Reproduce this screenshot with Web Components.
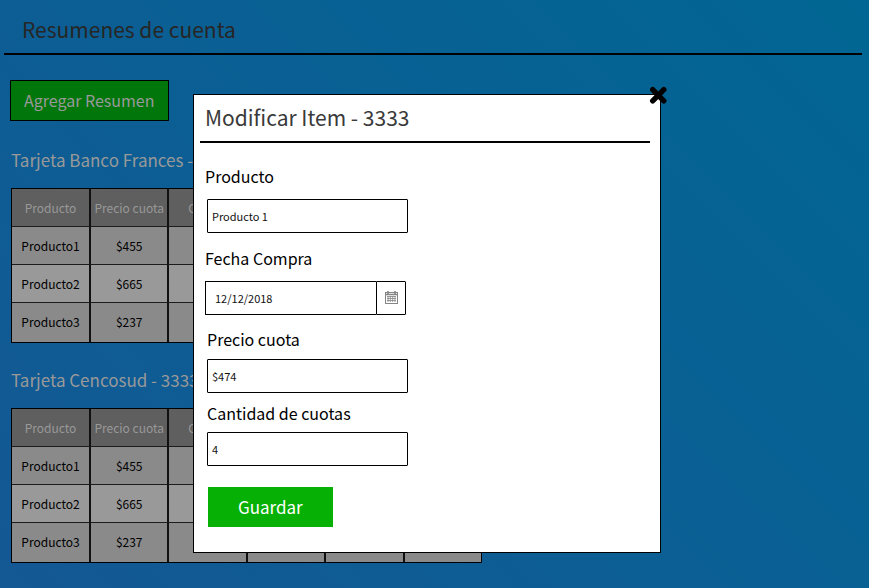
<!DOCTYPE html>
<html lang="es">
<head>
<meta charset="utf-8">
<meta name="viewport" content="width=device-width, initial-scale=1">
<title>Resumenes de cuenta</title>
<style>
  body { margin: 0; font-family: "Noto Sans CJK SC", "Noto Sans", sans-serif; color: #000; }
</style>
</head>
<body>
<account-page>
  <page-title slot="title">Resumenes de cuenta</page-title>
  <action-button variant="add">Agregar Resumen</action-button>
  <card-summary heading="Tarjeta Banco Frances -"></card-summary>
  <card-summary heading="Tarjeta Cencosud - 3333"></card-summary>
  <modal-dialog slot="modal" heading="Modificar Item - 3333">
    <form-field label="Producto" value="Producto 1" roomy></form-field>
    <date-field label="Fecha Compra" value="12/12/2018"></date-field>
    <form-field label="Precio cuota" value="$474"></form-field>
    <form-field label="Cantidad de cuotas" value="4" tight></form-field>
    <action-button slot="actions">Guardar</action-button>
  </modal-dialog>
</account-page>

<script>
class BaseElement extends HTMLElement {
  connectedCallback() {
    if (this.shadowRoot) return;
    this.attachShadow({ mode: 'open' }).innerHTML = this.render();
  }
}

class AccountPage extends BaseElement {
  render() {
    return `<style>
      :host { display: block; position: relative; min-height: 100vh; box-sizing: border-box;
        background: linear-gradient(45deg, #145894, #016693); }
      header { padding: 0 7px 0 4px; }
      main { display: flex; flex-direction: column; align-items: flex-start; gap: 24px; padding: 25px 10px; }
    </style>
    <header><slot name="title"></slot></header>
    <main><slot></slot></main>
    <slot name="modal"></slot>`;
  }
}

class PageTitle extends BaseElement {
  render() {
    return `<style>
      :host { display: block; }
      h1 { margin: 0; padding: 13px 18px 8px; border-bottom: 2px solid #000; font-size: 21px;
        line-height: 32px; font-weight: 400; color: #262626; }
    </style><h1><slot></slot></h1>`;
  }
}

class ActionButton extends BaseElement {
  render() {
    return `<style>
      :host { display: inline-block; }
      :host([variant="add"]) { margin-bottom: 2px; }
      button { display: block; font: inherit; font-size: 17px; line-height: 24px; color: #fff; background: #06b005;
        border: 0; padding: 8px 30px; margin: 0; white-space: nowrap; cursor: pointer; }
      :host([variant="add"]) button { font-size: 16px; line-height: 23px; color: #999; background: #00760b;
        border: 1px solid #000; padding: 8px 13px; }
    </style><button type="button"><slot></slot></button>`;
  }
}

class CardSummary extends BaseElement {
  render() {
    const rows = [['Producto1', '$455'], ['Producto2', '$665'], ['Producto3', '$237']];
    const blanks = '<td></td>'.repeat(4);
    return `<style>
      :host { display: block; width: 100%; }
      h2 { margin: 0 0 15px; padding-left: 1px; font-size: 17px; line-height: 26px; font-weight: 400; color: #999; }
      table { table-layout: fixed; width: min(471px, 100%); margin-left: 1px; box-sizing: border-box;
        border: 1px solid #000; border-spacing: 0; font-size: 12px; line-height: 18px; text-align: center; }
      th, td { box-sizing: border-box; height: 38px; padding: 0; border-top: 1px solid #1c1c1c; white-space: nowrap; }
      th { height: 37px; border-top: 0; background: #5f5f5f; color: #999; font-weight: 400; }
      th:first-child { width: 77px; }
      td { background: #8a8a8a; }
      tr:nth-child(even) td { background: #999; }
      tr:last-child td { height: 40px; padding-bottom: 2px; }
      th + th, td + td { border-left: 2px solid #111; }
    </style>
    <h2>${this.getAttribute('heading')}</h2>
    <table>
      <thead><tr><th>Producto</th><th>Precio cuota</th><th>Cuotas</th><th></th><th></th><th></th></tr></thead>
      <tbody>${rows.map(([a, b]) => `<tr><td>${a}</td><td>${b}</td>${blanks}</tr>`).join('')}</tbody>
    </table>`;
  }
}

class ModalDialog extends BaseElement {
  render() {
    return `<style>
      :host { display: block; position: absolute; inset: 0; padding: 94px 16px 16px 193px; box-sizing: border-box; }
      section { position: relative; box-sizing: border-box; width: 100%; max-width: 468px; padding: 6px 10px 25px 6px;
        background: #fff; border: 1px solid #000; }
      h2 { margin: 0 0 7px; padding: 0 5px 8px; border-bottom: 2px solid #000; font-size: 21px; line-height: 32px;
        font-weight: 400; color: #3a3a3a; }
      form { display: flex; flex-direction: column; padding: 0 5px; }
      .actions { padding: 21px 3px 0; display: flex; }
      .close { position: absolute; top: -9px; right: -7px; width: 18px; height: 18px; padding: 0; border: 0;
        background: none; cursor: pointer; }
      svg { display: block; width: 18px; height: 18px; }
    </style>
    <section role="dialog" aria-labelledby="t">
      <button class="close" type="button" aria-label="Cerrar">
        <svg viewBox="0 0 18 18"><path d="M3.7 3.7 14.8 14.8M14.8 3.7 3.7 14.8" stroke="#000" stroke-width="5.4" stroke-linecap="round"/></svg>
      </button>
      <h2 id="t">${this.getAttribute('heading')}</h2>
      <form><slot></slot><div class="actions"><slot name="actions"></slot></div></form>
    </section>`;
  }
}

const fieldStyles = `
  :host { display: flex; flex-direction: column; align-items: flex-start; padding: 12px 0 0 2px; gap: 8px; }
  label { font-size: 16px; line-height: 24px; }
  input { font: inherit; font-size: 11px; line-height: 16px; color: #111; background: #fff; border: 1px solid #000;
    border-radius: 1px; box-sizing: border-box; width: 201px; max-width: 100%; height: 34px; padding: 0 4px; margin: 0; outline: 0; }`;

class FormField extends BaseElement {
  render() {
    return `<style>${fieldStyles}
      :host([roomy]) { padding-top: 14px; gap: 11px; }
      :host([roomy]) label { margin-left: -2px; }
      :host([tight]) { padding-top: 8px; gap: 7px; }
    </style>
    <label for="f">${this.getAttribute('label')}</label>
    <input id="f" type="text" value="${this.getAttribute('value')}">`;
  }
}

class DateField extends BaseElement {
  render() {
    return `<style>${fieldStyles}
      :host { padding: 13px 0 0; gap: 11px; }
      .row { display: flex; width: 201px; max-width: 100%; }
      input { flex: 1; min-width: 0; padding: 0 9px; border-right: 0; border-radius: 1px 0 0 1px; }
      button { display: flex; align-items: center; justify-content: center; width: 30px; height: 34px; padding: 0;
        border: 1px solid #000; border-radius: 0 1px 1px 0; background: #fff; cursor: pointer; }
      svg { width: 14px; height: 14px; display: block; }
    </style>
    <label for="d">${this.getAttribute('label')}</label>
    <div class="row">
      <input id="d" type="text" value="${this.getAttribute('value')}">
      <button type="button" aria-label="Abrir calendario">
        <svg viewBox="0 0 14 14" fill="none" stroke="#858585">
          <rect x="1.5" y="1.5" width="12" height="11"/>
          <path d="M1.500 3.500h12M4 0v3M11 0v3" stroke-width="1.6"/>
          <path d="M3 5.500h9M3 7.500h9M3 9.500h9M4 5v6M6.300 5v6M8.700 5v6M11 5v6" stroke-width=".8"/>
        </svg>
      </button>
    </div>`;
  }
}

customElements.define('page-title', PageTitle);
customElements.define('action-button', ActionButton);
customElements.define('card-summary', CardSummary);
customElements.define('form-field', FormField);
customElements.define('date-field', DateField);
customElements.define('modal-dialog', ModalDialog);
customElements.define('account-page', AccountPage);
</script>
</body>
</html>
